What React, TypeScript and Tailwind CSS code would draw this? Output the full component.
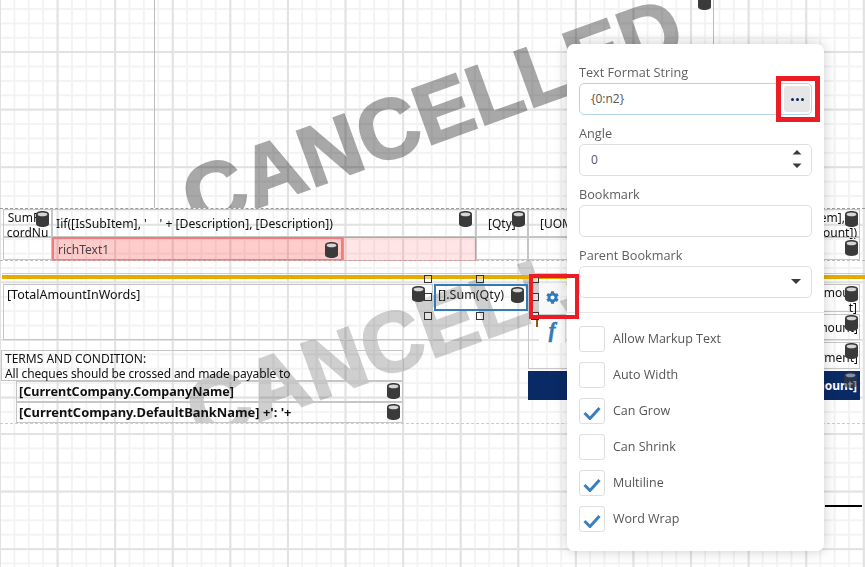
import { FaCog } from "react-icons/fa";

const GRID =
  "bg-[linear-gradient(#e2e2e2_2px,transparent_2px),linear-gradient(90deg,#e2e2e2_2px,transparent_2px),linear-gradient(#f3f3f3_2px,transparent_2px),linear-gradient(90deg,#f3f3f3_2px,transparent_2px)] bg-[size:57.6px_57.6px,57.6px_57.6px,14.4px_14.4px,14.4px_14.4px]";

const CELL = "relative border border-[#c6c6c6]";

const DbIcon = ({ className = "" }: { className?: string }) => (
  <svg viewBox="0 0 13 16" className={`absolute h-[16px] w-[13px] ${className}`}>
    <path d="M0 3.2C0 1.2 3 0 6.5 0S13 1.2 13 3.2v9.6c0 2-3 3.2-6.5 3.2S0 14.8 0 12.8z" fill="#3a3a3a" />
    <path d="M1.6 3.4C1.6 2.3 3.8 1.6 6.5 1.6s4.9.7 4.9 1.8-2.2 1.9-4.9 1.9-4.9-.8-4.9-1.9z" fill="#d6d6d6" />
  </svg>
);

const Handle = ({ className }: { className: string }) => (
  <div className={`absolute h-[8px] w-[8px] border border-[#333] bg-white/40 ${className}`} />
);

const Watermark = ({ className }: { className: string }) => (
  <div
    className={`absolute origin-left -rotate-[20deg] whitespace-nowrap font-['Liberation_Sans',sans-serif] text-[85px] font-bold leading-none mix-blend-multiply ${className}`}
  >
    CANCELLED
  </div>
);

const CHECKS = [
  { label: "Allow Markup Text", on: false },
  { label: "Auto Width", on: false },
  { label: "Can Grow", on: true },
  { label: "Can Shrink", on: false },
  { label: "Multiline", on: true },
  { label: "Word Wrap", on: true },
];

const Field = ({ label, children }: { label: string; children: React.ReactNode }) => (
  <div className="flex flex-col gap-[2px]">
    <label className="h-[18px] text-[12.7px] leading-[18px] text-[#5f5f5f]">{label}</label>
    {children}
  </div>
);

const Box = ({ children, className = "" }: { children?: React.ReactNode; className?: string }) => (
  <div className={`relative flex h-[32px] items-center rounded-[5px] border bg-white pl-[11px] text-[12px] text-[#555] ${className || "border-[#dedede]"}`}>
    {children}
  </div>
);

function PropertyPanel() {
  return (
    <div className="absolute left-[567px] top-[44px] flex h-[507px] w-[257px] flex-col rounded-[7px] bg-white px-[12px] pt-[19px] shadow-[0_0_14px_rgba(0,0,0,0.2)] font-['Open_Sans',sans-serif]">
      <div className="flex flex-col gap-[9px]">
        <Field label="Text Format String">
          <Box className="border-[#b5d2ea]">
            {"{0:n2}"}
            <div className="absolute right-[1px] top-[2px] flex h-[26px] w-[26px] items-center justify-center gap-[2px] rounded-[3px] bg-[#e6e6e6]">
              <span className="h-[3px] w-[3px] rounded-full bg-[#0a2a66]" />
              <span className="h-[3px] w-[3px] rounded-full bg-[#0a2a66]" />
              <span className="h-[3px] w-[3px] rounded-full bg-[#0a2a66]" />
            </div>
          </Box>
        </Field>
        <Field label="Angle">
          <Box>
            0
            <svg viewBox="0 0 10 18" className="absolute right-[9px] top-[5px] h-[18px] w-[10px]">
              <path d="M5 0l4.5 4.5h-9zM.5 13.5h9L5 18z" fill="#3a3a3a" />
            </svg>
          </Box>
        </Field>
        <Field label="Bookmark">
          <Box />
        </Field>
        <Field label="Parent Bookmark">
          <Box>
            <svg viewBox="0 0 10 5" className="absolute right-[10px] top-[12px] h-[5px] w-[10px]">
              <path d="M0 0h10L5 5z" fill="#3a3a3a" />
            </svg>
          </Box>
        </Field>
      </div>
      <div className="-mx-[12px] mt-[14px] h-px bg-[#e6e6e6]" />
      <div className="mt-[13px] flex flex-col gap-[10px]">
        {CHECKS.map((c) => (
          <div key={c.label} className="flex h-[26px] items-center gap-[8px]">
            <div className="flex h-[26px] w-[26px] items-center justify-center rounded-[3px] border border-[#dedede] bg-white">
              {c.on && (
                <svg viewBox="0 0 18 14" className="mt-[3px] h-[14px] w-[18px]">
                  <path d="M1.5 7l5.5 5.5L16.5 2" fill="none" stroke="#3a7fbe" strokeWidth="3" />
                </svg>
              )}
            </div>
            <span className="text-[12.5px] text-[#555]">{c.label}</span>
          </div>
        ))}
      </div>
    </div>
  );
}

function DetailBand() {
  return (
    <div className="grid grid-cols-[49px_424px_52px_1fr_40px] grid-rows-[28px_23px] border-t border-dashed border-[#999] pl-[3px] pr-[5px]">
      <div className={`${CELL} text-center leading-[15px]`}>
        SumRe cordNu
        <DbIcon className="left-[32px] top-[1px]" />
      </div>
      <div className={`${CELL} whitespace-pre pl-[3px] pt-[5px] text-[12.2px]`}>
        {"Iif([IsSubItem], '    ' + [Description], [Description])"}
        <DbIcon className="right-[3px] top-[1px]" />
      </div>
      <div className={`${CELL} pl-[11px] pt-[5px]`}>
        [Qty]
        <DbIcon className="right-[2px] top-[1px]" />
      </div>
      <div className={`${CELL} pl-[11px] pt-[5px]`}>[UOM]</div>
      <div className={`${CELL} -ml-[60px] whitespace-pre pr-[14px] text-right leading-[15px]`}>
        [Item],
        <br />
        <span className="-mr-[12px]">[Amount])</span>
        <DbIcon className="right-[1px] top-[1px]" />
      </div>

      <div className={CELL} />
      <div className="flex h-[24px]">
        <div className="relative w-[291px] border-2 border-[#f27c7c] bg-[#ff0000]/20 pl-[4px] pt-[2px] text-[#444]">
          richText1
          <DbIcon className="right-[3px] top-[3px]" />
        </div>
        <div className="flex-1 border border-[#f28a8a] bg-[#ff0000]/10" />
      </div>
      <div className={CELL} />
      <div className={CELL} />
      <div className={`${CELL} -ml-[60px]`}>
        <DbIcon className="right-[1px] top-[2px]" />
      </div>
    </div>
  );
}

function FooterBand() {
  return (
    <div className="relative flex h-[140px] border-b border-dashed border-[#ccc] pr-[5px]">
      {/* left column */}
      <div className="flex w-[528px] flex-col">
        <div className="relative flex h-[58px]">
          <div className={`${CELL} ml-[3px] w-[430px] pl-[3px] pt-[1px] text-[12.5px]`}>
            [TotalAmountInWords]
            <DbIcon className="right-[7px] top-[1px]" />
          </div>
          <div className="relative ml-[1px] h-[27px] w-[94px] border-2 border-[#337ab7] pl-[2px] text-[12.5px] text-[#222]">
            [].Sum(Qty)
            <DbIcon className="right-[2px] top-[1px]" />
          </div>
          <Handle className="left-[424px] top-[-9px]" />
          <Handle className="left-[476px] top-[-9px]" />
          <Handle className="left-[424px] top-[9px]" />
          <Handle className="left-[424px] top-[28px]" />
          <Handle className="left-[476px] top-[28px]" />
        </div>
        <div className={`${CELL} ml-[1px] mt-[10px] h-[31px] w-[402px] pl-[3px] leading-[15px] whitespace-pre`}>
          <div>TERMS AND CONDITION:</div>
          <div className="tracking-[-0.12px]">All cheques should be crossed and made payable to</div>
        </div>
        <div className={`${CELL} ml-[16px] h-[21px] w-[387px] pl-[2px] pt-[1px] text-[12.6px] font-bold`}>
          [CurrentCompany.CompanyName]
          <DbIcon className="right-[2px] top-[1px]" />
        </div>
        <div className={`${CELL} ml-[16px] h-[21px] w-[387px] pl-[2px] pt-[1px] text-[12.9px] font-bold`}>
          <div className="h-[19px] overflow-hidden whitespace-pre leading-[17px]">
            {"[CurrentCompany.DefaultBankName] +': '+\n[CurrentCompany.DefaultBankAcNo]"}
          </div>
          <DbIcon className="right-[2px] top-[1px]" />
        </div>
      </div>

      {/* right column */}
      <div className="grid flex-1 grid-cols-[40px_1fr_40px] grid-rows-[28px_2px_26px_2px_27px_2px_29px] content-start">
        <div className={`${CELL} row-span-5`} />
        <div />
        <div className={`${CELL} -ml-[60px] whitespace-pre pr-[2px] text-right leading-[15px]`}>
          {"[TotalAmoun\nt]"}
          <DbIcon className="right-[1px] top-[1px]" />
        </div>
        <div className={`${CELL} col-start-3 row-start-3 -ml-[60px] pr-[1px] pt-[4px] text-right`}>
          [Amount]
          <DbIcon className="right-[1px] top-[0px]" />
        </div>
        <div className={`${CELL} col-start-3 row-start-5 -ml-[60px] pr-[1px] pt-[6px] text-right`}>
          [Payment]
          <DbIcon className="right-[1px] top-[0px]" />
        </div>
        <div className="relative col-span-3 row-start-7 bg-[#0a2a66] pr-[3px] pt-[6px] text-right font-bold text-white">
          [Amount]
          <DbIcon className="right-[3px] top-[1px] opacity-60" />
        </div>
      </div>
    </div>
  );
}

export default function App() {
  return (
    <div className="relative flex h-[567px] w-[865px] flex-col overflow-hidden bg-white font-['Noto_Sans',sans-serif] text-[12px] text-[#111]">
      {/* upper part of the design surface */}
      <div className={`relative h-[424px] ${GRID} bg-[position:0_51px,-1px_0,0_8px,-1px_0]`}>
        <div className="relative h-[208px] overflow-hidden">
          <div className="absolute bottom-0 left-[154px] top-0 w-px bg-[#bbb]" />
          <div className="absolute bottom-0 left-[713px] top-0 w-px bg-[#bbb]" />
          <Watermark className="left-[186px] top-[160px] text-[#a8a8a8] [-webkit-text-stroke:2px_#a8a8a8]" />
          <DbIcon className="left-[698px] top-[-6px]" />
        </div>
        <DetailBand />
        <div className="relative">
          <div className="pointer-events-none absolute left-0 top-[0px] h-[163px] w-full overflow-hidden">
            <Watermark className="left-[190px] top-[113px] text-[#cfcfcf] [-webkit-text-stroke:2px_#cfcfcf]" />
          </div>
          <div className="border-t border-dashed border-[#bbb]" />
          <div className="relative ml-[2px] mt-[12px] h-[11px] border-t border-[#ccc]">
            <div className="mt-[1px] h-[4px] bg-[#e5ac00]" />
          </div>
          <FooterBand />
        </div>
      </div>

      {/* lower part of the design surface */}
      <div className={`relative flex-1 ${GRID} bg-[position:0_9px,-1px_0,0_9px,-1px_0]`}>
        <div className="absolute left-[825px] top-[81px] h-[2px] w-[37px] bg-black" />
      </div>

      <Handle className="left-[531px] top-[275px]" />
      <Handle className="left-[531px] top-[293px]" />
      <Handle className="left-[531px] top-[312px]" />
      <div className="absolute left-[536px] top-[320px] h-[7px] w-[2px] bg-[#8a5a1a]" />

      {/* context tabs */}
      <div className="absolute left-[539px] top-[283px] h-[33px] w-[27px]">
        <div className="h-full w-full border-b-2 border-[#ccc] bg-[#f8f8f8] [clip-path:polygon(0_0,100%_0,100%_15%,72%_50%,100%_85%,100%_100%,0_100%)]" />
        <FaCog className="absolute left-[7px] top-[8px] text-[13px] text-[#337ab7]" />
      </div>
      <div className="absolute left-[539px] top-[319px] flex h-[24px] w-[27px] items-center justify-center border-r border-[#e0e0e0] bg-white pb-[3px] font-['Liberation_Serif',serif] text-[20px] font-bold italic leading-none text-[#337ab7] [-webkit-text-stroke:0.6px_#337ab7]">
        f
      </div>

      <PropertyPanel />

      {/* red highlight boxes */}
      <div className="absolute left-[529px] top-[274px] h-[45px] w-[50px] border-[4px] border-[#ec1c24]" />
      <div className="absolute left-[776px] top-[76px] h-[46px] w-[44px] border-[5px] border-[#ec1c24]" />
    </div>
  );
}
